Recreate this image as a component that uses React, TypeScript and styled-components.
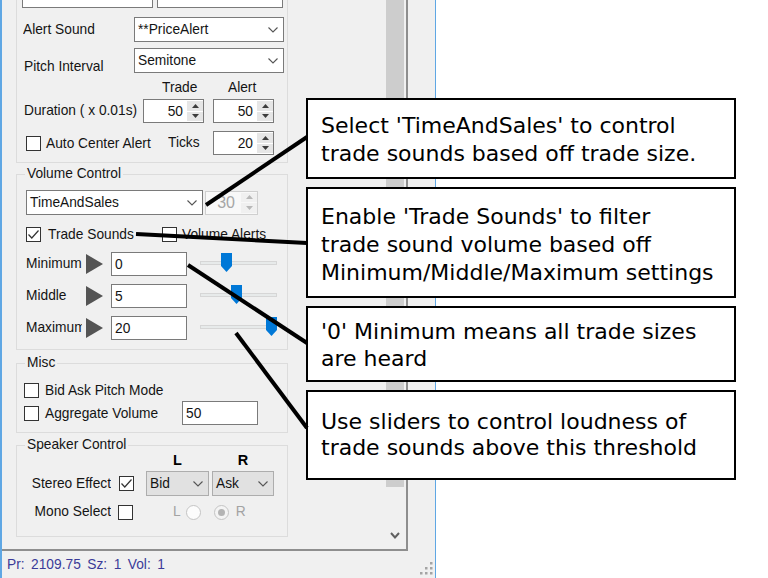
import React from "react";
import styled, { createGlobalStyle } from "styled-components";

const GlobalStyle = createGlobalStyle`
  * { box-sizing: border-box; }
  html, body { margin: 0; padding: 0; background: #ffffff; }
  body { font-family: "Liberation Sans", Arial, sans-serif; overflow: hidden; }
`;

const Page = styled.div`
  position: relative;
  width: 768px;
  height: 578px;
  overflow: hidden;
  background: #ffffff;
`;

const Window = styled.div`
  width: 436px;
  height: 578px;
  display: flex;
  flex-direction: column;
  background: #f0f0f0;
  border-left: 2px solid #5fa7e4;
  border-right: 1px solid #5fa7e4;
  font-family: "Liberation Sans", Arial, sans-serif;
  font-size: 13.75px;
  color: #141414;
`;

const Main = styled.div`
  display: flex;
  flex: none;
  height: 551px;
`;

const Panel = styled.div`
  display: flex;
  flex: none;
  width: 406px;
  height: 551px;
  border-right: 2px solid #8e8e8e;
  border-bottom: 2px solid #8e8e8e;
`;

const ScrollArea = styled.div`
  width: 384px;
  height: 549px;
  overflow: hidden;
  background: #f0f0f0;
`;

const ScrollContent = styled.div`
  margin-top: -39px;
`;

const ScrollBar = styled.div`
  width: 20px;
  display: flex;
  flex-direction: column;
  background: #f0f0f0;
`;

const ScrollThumb = styled.div`
  height: 487px;
  width: 18px;
  background: #cdcdcd;
`;

const ScrollArrow = styled.div`
  margin-top: auto;
  margin-bottom: 3px;
  width: 18px;
  height: 22px;
  display: flex;
  align-items: center;
  justify-content: center;
`;

const RightStrip = styled.div`
  flex: 1;
  background: #f0f0f0;
`;

const Group = styled.fieldset<{ $mt?: number; $pt: number; $pb: number }>`
  margin: ${(p) => p.$mt ?? 0}px 0 0 14px;
  width: 272px;
  min-width: 0;
  padding: ${(p) => p.$pt}px 0 ${(p) => p.$pb}px 0;
  border: 1px solid #dcdcdc;
`;

const Legend = styled.legend`
  margin-left: 8px;
  padding: 0 2px;
  height: 18px;
  line-height: 18px;
`;

const Row = styled.div<{ $h: number; $mt?: number; $pl: number; $gap?: number }>`
  display: flex;
  align-items: center;
  height: ${(p) => p.$h}px;
  margin-top: ${(p) => p.$mt ?? 0}px;
  padding-left: ${(p) => p.$pl}px;
  gap: ${(p) => p.$gap ?? 0}px;
`;

const Label = styled.span<{ $w?: number; $push?: number; $right?: boolean; $muted?: boolean }>`
  flex: none;
  width: ${(p) => (p.$w ? `${p.$w}px` : "auto")};
  white-space: nowrap;
  overflow: hidden;
  line-height: 16px;
  padding-top: ${(p) => p.$push ?? 0}px;
  text-align: ${(p) => (p.$right ? "right" : "left")};
  color: ${(p) => (p.$muted ? "#a3a3a3" : "inherit")};
`;

const HeadCell = styled.span<{ $w?: number; $bold?: boolean; $center?: boolean }>`
  flex: none;
  width: ${(p) => (p.$w ? `${p.$w}px` : "auto")};
  text-align: ${(p) => (p.$center ? "center" : "left")};
  font-weight: ${(p) => (p.$bold ? 700 : 400)};
  font-size: ${(p) => (p.$bold ? "14.5px" : "13.75px")};
  line-height: 14px;
  color: ${(p) => (p.$bold ? "#000" : "inherit")};
`;

const Combo = styled.div<{ $w: number; $flat?: boolean }>`
  flex: none;
  width: ${(p) => p.$w}px;
  height: 25px;
  display: flex;
  align-items: center;
  justify-content: space-between;
  padding: 0 5px 0 3px;
  background: ${(p) => (p.$flat ? "#e1e1e1" : "#ffffff")};
  border: 1px solid ${(p) => (p.$flat ? "#adadad" : "#7a7a7a")};
  white-space: nowrap;
  overflow: hidden;
`;

const SpinBox = styled.div<{ $w: number; $disabled?: boolean }>`
  flex: none;
  width: ${(p) => p.$w}px;
  height: 24px;
  display: flex;
  align-items: stretch;
  background: ${(p) => (p.$disabled ? "#f8f8f8" : "#ffffff")};
  border: 1px solid ${(p) => (p.$disabled ? "#cfcfcf" : "#7a7a7a")};
  color: ${(p) => (p.$disabled ? "#a6a6a6" : "#141414")};
  font-size: ${(p) => (p.$disabled ? "16px" : "13.75px")};
`;

const SpinValue = styled.span<{ $pr: number }>`
  flex: 1;
  display: flex;
  align-items: center;
  justify-content: flex-end;
  padding-right: ${(p) => p.$pr}px;
`;

const SpinButtons = styled.div`
  width: 16px;
  display: flex;
  flex-direction: column;
  gap: 1px;
  padding: 1px 0;
`;

const SpinBtn = styled.span<{ $disabled?: boolean }>`
  flex: 1;
  display: flex;
  align-items: center;
  justify-content: center;
  background: ${(p) => (p.$disabled ? "#f0f0f0" : "#e6e6e6")};
`;

const TextBox = styled.div<{ $w: number }>`
  flex: none;
  width: ${(p) => p.$w}px;
  height: 24px;
  display: flex;
  align-items: center;
  padding-left: 3px;
  background: #ffffff;
  border: 1px solid #7a7a7a;
`;

const CheckBox = styled.span`
  flex: none;
  width: 15px;
  height: 15px;
  display: flex;
  align-items: center;
  justify-content: center;
  background: #ffffff;
  border: 1px solid #333333;
`;

const CheckWrap = styled.span<{ $w?: number; $gap: number }>`
  flex: none;
  display: flex;
  align-items: center;
  gap: ${(p) => p.$gap}px;
  width: ${(p) => (p.$w ? `${p.$w}px` : "auto")};
  white-space: nowrap;
`;

const Radio = styled.span<{ $checked?: boolean }>`
  flex: none;
  width: 15px;
  height: 15px;
  border-radius: 50%;
  display: flex;
  align-items: center;
  justify-content: center;
  border: 1px solid #c4c4c4;
  background: ${(p) => (p.$checked ? "#f4f4f4" : "#fcfcfc")};
  &::after {
    content: "";
    width: 7px;
    height: 7px;
    border-radius: 50%;
    background: ${(p) => (p.$checked ? "#b4b4b4" : "transparent")};
  }
`;

const SliderBox = styled.div`
  position: relative;
  flex: none;
  width: 77px;
  height: 24px;
  padding-top: 9px;
`;

const Track = styled.div`
  height: 4px;
  background: #e7eaea;
  border: 1px solid #d6d6d6;
`;

const ThumbMark = styled.svg<{ $left: number }>`
  position: absolute;
  top: 1px;
  left: ${(p) => p.$left}px;
`;

const StatusBar = styled.div`
  flex: 1;
  display: flex;
  align-items: center;
  gap: 6.5px;
  padding-left: 5px;
  color: #3b3b98;
`;

const Grip = styled.svg`
  margin-left: auto;
  margin-right: 2px;
  align-self: flex-end;
  margin-bottom: 3px;
`;

const CalloutColumn = styled.div`
  position: absolute;
  left: 306px;
  top: 98px;
  width: 430px;
  display: flex;
  flex-direction: column;
  gap: 8px;
`;

const Callout = styled.div<{ $h: number; $pt: number; $lh: number }>`
  height: ${(p) => p.$h}px;
  padding: ${(p) => p.$pt}px 0 0 13px;
  background: #ffffff;
  border: 2px solid #000000;
  font-family: "DejaVu Sans", Verdana, sans-serif;
  font-size: 22px;
  line-height: ${(p) => p.$lh}px;
  color: #000000;
  white-space: nowrap;
`;

const Leaders = styled.svg`
  position: absolute;
  left: 0;
  top: 0;
  pointer-events: none;
`;

const Chevron = ({ color = "#555" }: { color?: string }) => (
  <svg width="10" height="6" viewBox="0 0 10 6">
    <polyline points="0.5,0.5 5,5 9.5,0.5" fill="none" stroke={color} strokeWidth="1.1" />
  </svg>
);

const Tri = ({ up, color }: { up?: boolean; color: string }) => (
  <svg width="7" height="4" viewBox="0 0 7 4">
    <polygon points={up ? "0,4 3.5,0 7,4" : "0,0 3.5,4 7,0"} fill={color} />
  </svg>
);

const Check = () => (
  <svg width="13" height="13" viewBox="0 0 13 13">
    <polyline points="1.5,6.5 4.8,10 11.5,2.5" fill="none" stroke="#333" strokeWidth="1.2" />
  </svg>
);

const Play = () => (
  <svg width="17" height="20" viewBox="0 0 17 20" style={{ flex: "none" }}>
    <polygon points="0,0 17,10 0,20" fill="#545454" />
  </svg>
);

function Spin({ w, value, disabled, pr }: { w: number; value: string; disabled?: boolean; pr: number }) {
  const c = disabled ? "#b8b8b8" : "#3c3c3c";
  return (
    <SpinBox $w={w} $disabled={disabled}>
      <SpinValue $pr={pr}>{value}</SpinValue>
      <SpinButtons>
        <SpinBtn $disabled={disabled}>
          <Tri up color={c} />
        </SpinBtn>
        <SpinBtn $disabled={disabled}>
          <Tri color={c} />
        </SpinBtn>
      </SpinButtons>
    </SpinBox>
  );
}

function Slider({ value }: { value: number }) {
  const left = Math.round((value / 100) * 66);
  return (
    <SliderBox>
      <Track />
      <ThumbMark $left={left} width="11" height="19" viewBox="0 0 11 19">
        <polygon points="0,0 11,0 11,13 5.5,19 0,13" fill="#0078d7" />
      </ThumbMark>
    </SliderBox>
  );
}

function Box({ w, text, flat }: { w: number; text: string; flat?: boolean }) {
  return (
    <Combo $w={w} $flat={flat}>
      <span>{text}</span>
      <Chevron />
    </Combo>
  );
}

const levels = [
  { label: "Minimum", value: "0", pos: 32 },
  { label: "Middle", value: "5", pos: 47 },
  { label: "Maximum", value: "20", pos: 100 },
];

const callouts = [
  { h: 81, pt: 12, lh: 28, lines: ["Select 'TimeAndSales' to control", "trade sounds based off trade size."] },
  {
    h: 111,
    pt: 14,
    lh: 28,
    lines: ["Enable 'Trade Sounds' to filter", "trade sound volume based off", "Minimum/Middle/Maximum settings"],
  },
  { h: 76, pt: 10, lh: 27, lines: ["'0' Minimum means all trade sizes", "are heard"] },
  { h: 90, pt: 17, lh: 26, lines: ["Use sliders to control loudness of", "trade sounds above this threshold"] },
];

export default function App() {
  return (
    <Page>
      <GlobalStyle />
      <Window>
        <Main>
          <Panel>
            <ScrollArea>
              <ScrollContent>
                <Group $pt={21} $pb={7}>
                  <Row $h={25} $pl={5} $gap={4}>
                    <Box w={131} text="All" />
                    <Box w={126} text="Lin" />
                  </Row>
                  <Row $h={25} $mt={9} $pl={6}>
                    <Label $w={111}>Alert Sound</Label>
                    <Box w={150} text="**PriceAlert" />
                  </Row>
                  <Row $h={25} $mt={6} $pl={7}>
                    <Label $w={110} $push={12}>
                      Pitch Interval
                    </Label>
                    <Box w={150} text="Semitone" />
                  </Row>
                  <Row $h={18} $mt={6} $pl={145}>
                    <HeadCell $w={66}>Trade</HeadCell>
                    <HeadCell>Alert</HeadCell>
                  </Row>
                  <Row $h={24} $mt={2} $pl={7}>
                    <Label $w={119}>Duration ( x 0.01s)</Label>
                    <Spin w={61} value="50" pr={4} />
                    <Label $w={9} />
                    <Spin w={61} value="50" pr={4} />
                  </Row>
                  <Row $h={24} $mt={8} $pl={9}>
                    <CheckWrap $w={142} $gap={5}>
                      <CheckBox />
                      <span>Auto Center Alert</span>
                    </CheckWrap>
                    <Label $w={45}>Ticks</Label>
                    <Spin w={61} value="20" pr={4} />
                  </Row>
                </Group>

                <Group $mt={2} $pt={7} $pb={9}>
                  <Legend>Volume Control</Legend>
                  <Row $h={25} $pl={9} $gap={2}>
                    <Box w={177} text="TimeAndSales" />
                    <Spin w={53} value="30" disabled pr={6} />
                  </Row>
                  <Row $h={16} $mt={11} $pl={9}>
                    <CheckWrap $w={136} $gap={7}>
                      <CheckBox>
                        <Check />
                      </CheckBox>
                      <span>Trade Sounds</span>
                    </CheckWrap>
                    <CheckWrap $gap={5}>
                      <CheckBox />
                      <span>Volume Alerts</span>
                    </CheckWrap>
                  </Row>
                  {levels.map((l, i) => (
                    <Row key={l.label} $h={24} $mt={i === 0 ? 10 : 8} $pl={9}>
                      <Label $w={56}>{l.label}</Label>
                      <Label $w={4} />
                      <Play />
                      <Label $w={8} />
                      <TextBox $w={76}>{l.value}</TextBox>
                      <Label $w={13} />
                      <Slider value={l.pos} />
                    </Row>
                  ))}
                </Group>

                <Group $mt={4} $pt={10} $pb={7}>
                  <Legend>Misc</Legend>
                  <Row $h={16} $pl={7}>
                    <CheckWrap $gap={6}>
                      <CheckBox />
                      <span>Bid Ask Pitch Mode</span>
                    </CheckWrap>
                  </Row>
                  <Row $h={24} $mt={3} $pl={7}>
                    <CheckWrap $w={158} $gap={6}>
                      <CheckBox />
                      <span>Aggregate Volume</span>
                    </CheckWrap>
                    <TextBox $w={76}>50</TextBox>
                  </Row>
                </Group>

                <Group $mt={3} $pt={0} $pb={16}>
                  <Legend>Speaker Control</Legend>
                  <Row $h={12} $pl={129} $gap={3}>
                    <HeadCell $w={63} $bold $center>
                      L
                    </HeadCell>
                    <HeadCell $w={62} $bold $center>
                      R
                    </HeadCell>
                  </Row>
                  <Row $h={25} $mt={5} $pl={0}>
                    <Label $w={94} $right>
                      Stereo Effect
                    </Label>
                    <Label $w={8} />
                    <CheckBox>
                      <Check />
                    </CheckBox>
                    <Label $w={12} />
                    <Box w={63} text="Bid" flat />
                    <Label $w={3} />
                    <Box w={62} text="Ask" flat />
                  </Row>
                  <Row $h={16} $mt={8} $pl={0}>
                    <Label $w={94} $right>
                      Mono Select
                    </Label>
                    <Label $w={7} />
                    <CheckBox />
                    <Label $w={40} />
                    <Label $muted>L</Label>
                    <Label $w={5} />
                    <Radio />
                    <Label $w={13} />
                    <Radio $checked />
                    <Label $w={7} />
                    <Label $muted>R</Label>
                  </Row>
                </Group>
              </ScrollContent>
            </ScrollArea>
            <ScrollBar>
              <ScrollThumb />
              <ScrollArrow>
                <svg width="10" height="7" viewBox="0 0 10 7">
                  <polyline points="1,1 5,5.5 9,1" fill="none" stroke="#606060" strokeWidth="2" />
                </svg>
              </ScrollArrow>
            </ScrollBar>
          </Panel>
          <RightStrip />
        </Main>
        <StatusBar>
          <span>Pr:</span>
          <span>2109.75</span>
          <span>Sz:</span>
          <span>1</span>
          <span>Vol:</span>
          <span>1</span>
          <Grip width="13" height="13" viewBox="0 0 13 13">
            {[
              [10, 0],
              [5, 5],
              [10, 5],
              [0, 10],
              [5, 10],
              [10, 10],
            ].map(([x, y]) => (
              <rect key={`${x}-${y}`} x={x} y={y} width="2.5" height="2.5" fill="#a4a4a4" />
            ))}
          </Grip>
        </StatusBar>
      </Window>

      <CalloutColumn>
        {callouts.map((c, i) => (
          <Callout key={i} $h={c.h} $pt={c.pt} $lh={c.lh}>
            {c.lines.map((ln) => (
              <div key={ln}>{ln}</div>
            ))}
          </Callout>
        ))}
      </CalloutColumn>

      <Leaders width="768" height="578" viewBox="0 0 768 578">
        <g stroke="#000" strokeWidth="4" strokeLinecap="butt">
          <line x1="206" y1="205" x2="307" y2="137" />
          <line x1="136" y1="234" x2="307" y2="243" />
          <line x1="188" y1="265" x2="307" y2="343" />
          <line x1="236" y1="333" x2="307" y2="428" />
        </g>
      </Leaders>
    </Page>
  );
}
